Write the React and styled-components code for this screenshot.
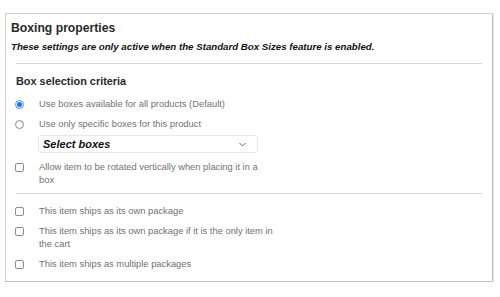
import React from "react";
import styled, { createGlobalStyle } from "styled-components";

const GlobalStyle = createGlobalStyle`
  body {
    margin: 0;
    background: #fff;
    font-family: "Liberation Sans", Arial, sans-serif;
  }
`;

const Page = styled.div`
  padding: 13px 7px 0 5px;
`;

const Panel = styled.section`
  border: 1px solid #d2d2d2;
  border-right-color: #c2c2c2;
  border-bottom-color: #c2c2c2;
  box-shadow: 1px 1px 0 #e4e4e4;
  padding: 6px 10px 0 5px;
  height: 269px;
  box-sizing: border-box;
`;

const Title = styled.h2`
  margin: 0;
  font-size: 12.2px;
  font-weight: 700;
  color: #2a2a2a;
  line-height: 16px;
`;

const Note = styled.p`
  margin: 5px 0 0;
  font-size: 9.7px;
  font-weight: 700;
  font-style: italic;
  color: #111;
  line-height: 12px;
`;

const Section = styled.div`
  margin-left: 5px;
`;

const Divider = styled.hr`
  border: 0;
  border-top: 1px solid #d6d6d6;
  margin: ${(p) => p.$mt || 0}px 0 0;
`;

const SubTitle = styled.h3`
  margin: 10px 0 0;
  font-size: 10.9px;
  font-weight: 700;
  color: #2a2a2a;
  line-height: 14px;
`;

const List = styled.div`
  display: flex;
  flex-direction: column;
  margin-top: ${(p) => p.$mt || 0}px;
  margin-left: -1px;
`;

const Option = styled.label`
  display: flex;
  align-items: flex-start;
  font-size: 9.35px;
  line-height: 13px;
  color: #727272;
  margin-top: ${(p) => p.$mt || 0}px;
`;

const Mark = styled.span`
  width: 24px;
  flex: none;
  display: flex;
  padding-top: 2px;
`;

const Radio = styled.span`
  width: 7px;
  height: 7px;
  border-radius: 50%;
  border: 1px solid ${(p) => (p.$on ? "#4a8ef5" : "#8c8c8c")};
  background: #fff;
  display: flex;
  align-items: center;
  justify-content: center;
  &::after {
    content: "";
    width: 5px;
    height: 5px;
    border-radius: 50%;
    background: ${(p) => (p.$on ? "#1a6ff0" : "transparent")};
  }
`;

const Check = styled.span`
  width: 7px;
  height: 7px;
  border-radius: 2px;
  border: 1px solid #8c8c8c;
  background: #fff;
`;

const Text = styled.span`
  max-width: ${(p) => p.$w || 238}px;
`;

const Select = styled.div`
  margin: 4px 0 0 23px;
  width: 220px;
  height: 18px;
  box-sizing: border-box;
  border: 1px solid #e8e8e8;
  border-radius: 3px;
  display: flex;
  align-items: center;
  justify-content: space-between;
  padding: 0 11px 0 4px;
  font-size: 11px;
  font-weight: 700;
  font-style: italic;
  color: #111;
`;

const Chevron = () => (
  <svg width="7" height="5" viewBox="0 0 7 5">
    <path d="M0.5 1 L3.5 4 L6.5 1" fill="none" stroke="#666" strokeWidth="1" />
  </svg>
);

export default function App() {
  return (
    <Page>
      <GlobalStyle />
      <Panel>
        <Title>Boxing properties</Title>
        <Note>These settings are only active when the Standard Box Sizes feature is enabled.</Note>
        <Section>
          <Divider $mt={10} />
          <SubTitle>Box selection criteria</SubTitle>
          <List $mt={10}>
            <Option>
              <Mark><Radio $on /></Mark>
              <Text>Use boxes available for all products (Default)</Text>
            </Option>
            <Option $mt={7}>
              <Mark><Radio /></Mark>
              <Text>Use only specific boxes for this product</Text>
            </Option>
            <Select>
              <span>Select boxes</span>
              <Chevron />
            </Select>
            <Option $mt={8}>
              <Mark><Check /></Mark>
              <Text $w={226}>Allow item to be rotated vertically when placing it in a box</Text>
            </Option>
          </List>
          <Divider $mt={6} />
          <List $mt={11}>
            <Option>
              <Mark><Check /></Mark>
              <Text>This item ships as its own package</Text>
            </Option>
            <Option $mt={7}>
              <Mark><Check /></Mark>
              <Text>This item ships as its own package if it is the only item in the cart</Text>
            </Option>
            <Option $mt={7}>
              <Mark><Check /></Mark>
              <Text>This item ships as multiple packages</Text>
            </Option>
          </List>
        </Section>
      </Panel>
    </Page>
  );
}
